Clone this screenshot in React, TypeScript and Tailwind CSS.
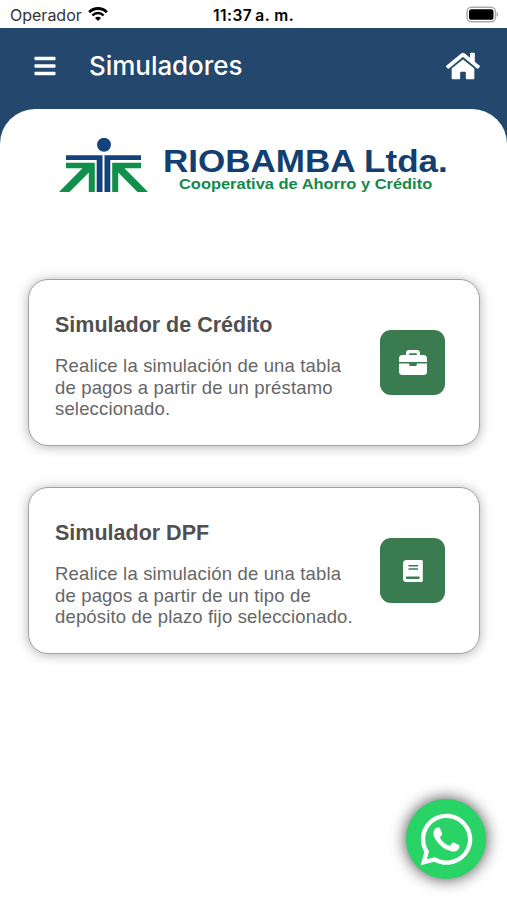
import type { ReactNode } from "react";
import { FaBars, FaHome, FaWhatsapp } from "react-icons/fa";

function StatusBar() {
  return (
    <div className="grid h-7 grid-cols-[1fr_auto_1fr] items-center bg-white pt-0.5 pr-2 pl-2.5 font-['Inter',sans-serif] text-black">
      <div className="flex items-center gap-1.5">
        <span className="text-[16px] leading-5 text-[#333]">Operador</span>
        <svg viewBox="0 0 20 14" className="mb-0.5 h-[14px] w-5">
          <path d="M1.2 5.2a12.3 12.3 0 0 1 17.6 0" fill="none" stroke="currentColor" strokeWidth="2.8" />
          <path d="M4.4 8.5a7.7 7.7 0 0 1 11.2 0" fill="none" stroke="currentColor" strokeWidth="2.5" />
          <path d="M10 14l-3-3a4.2 4.2 0 0 1 6 0z" fill="currentColor" />
        </svg>
      </div>
      <span className="pt-0.5 pr-0.5 text-[15.5px] leading-5 font-semibold tracking-[0.5px]">11:37<span className="pl-[3px]">a. m.</span></span>
      <svg viewBox="0 0 34 17" className="mb-0.5 h-[17px] w-[34px] justify-self-end">
        <rect x="2" y="1.2" width="28.5" height="14.6" rx="4.5" fill="#fff" stroke="#aaa" strokeWidth="1.5" />
        <rect x="4" y="3.2" width="24.5" height="10.6" rx="2.6" fill="#000" />
        <path d="M31.8 6.2q1.4.7 1.4 2.3t-1.4 2.3z" fill="#aaa" />
      </svg>
    </div>
  );
}

function Logo() {
  return (
    <div className="flex h-[56px] pl-[59px]">
      <svg viewBox="0 0 90 54" className="h-[54px] w-[90px]">
        <circle cx="45" cy="6.8" r="7" fill="#14427a" />
        <g fill="#14427a">
          <path d="M7 17.2h36.5V54h-5.8V22H7z" />
          <path d="M82 17.2H45.5V54h5.8V22H82z" />
        </g>
        <g fill="#10904a">
          <path d="M7 24.8h28.8V54h-6V34.6L10.5 54H0l23.5-23.8H7z" />
          <path d="M82 24.8H53.2V54h6V34.6L78.5 54H89L65.5 30.2H82z" />
        </g>
      </svg>
      <div className="pt-[10px] pl-[14px] font-['Liberation_Sans',sans-serif] font-bold whitespace-nowrap">
        <div className="origin-left scale-x-[1.13] text-[31px] leading-[28px] text-[#123f6f]">RIOBAMBA Ltda.</div>
        <div className="origin-left translate-x-4 scale-x-[1.06] text-[15.5px] leading-4 text-[#14894a]">Cooperativa de Ahorro y Crédito</div>
      </div>
    </div>
  );
}

function BriefcaseIcon() {
  return (
    <svg viewBox="0 0 28 25" className="h-[25px] w-7" fill="currentColor">
      <path fillRule="evenodd" d="M7 5V3a3 3 0 0 1 3-3h8a3 3 0 0 1 3 3v2h3.5a3.500 3.500 0 0 1 3.500 3.500V12H0V8.500A3.500 3.500 0 0 1 3.500 5zm3.200 0h7.600V3.300h-7.600z" />
      <path d="M0 13.500h10.200v1.300q0 1.200 1.200 1.200h5.200q1.200 0 1.200-1.200v-1.300H28v8a3.500 3.500 0 0 1-3.500 3.500h-21A3.500 3.500 0 0 1 0 21.500z" />
    </svg>
  );
}

function BookIcon() {
  return (
    <svg viewBox="0 0 20 22" className="h-[22px] w-5" fill="currentColor">
      <path fillRule="evenodd" d="M3.500 0h15Q19.800 0 19.800 1.300v19.400q0 1.300-1.300 1.300h-15A3.500 3.500 0 0 1 0 18.500v-15A3.500 3.500 0 0 1 3.500 0zm2 5v1.500H15V5zm0 3.300v1.500H15V8.300zM4 16.500a1.250 1.250 0 0 0 0 2.500h12.500v-2.500z" />
    </svg>
  );
}

function Card({ title, lines, icon }: { title: string; lines: string[]; icon: ReactNode }) {
  return (
    <section className="flex h-[167px] items-center justify-between rounded-[20px] border border-[#a3a3a3] bg-white pr-[34px] pl-[26px] shadow-[0_1px_12px_rgba(0,0,0,0.3)]">
      <div className="pt-2 whitespace-nowrap">
        <h2 className="text-[21.5px] leading-6 font-bold text-[#505050]">{title}</h2>
        <p className="pt-[18px] text-[18.5px] leading-[21.5px] tracking-[0.16px] text-[#666]">
          {lines.map((line) => (
            <span key={line} className="block">{line}</span>
          ))}
        </p>
      </div>
      <div className="flex size-[65px] shrink-0 items-center justify-center rounded-[11px] bg-[#3b7b50] text-white">{icon}</div>
    </section>
  );
}

export default function App() {
  return (
    <div className="flex h-[900px] w-[507px] flex-col overflow-hidden bg-[#24486d] font-['Liberation_Sans',sans-serif]">
      <StatusBar />
      <header className="flex h-[81px] items-center pr-[27px] pb-[5px] pl-[33px] text-white">
        <FaBars className="size-6" />
        <h1 className="pl-8 font-['Inter',sans-serif] text-[26px] leading-8 font-medium tracking-[-0.05px]">Simuladores</h1>
        <FaHome className="ml-auto h-[34px] w-[34px]" />
      </header>
      <main className="flex-1 rounded-t-[35px] bg-white pt-[29px]">
        <Logo />
        <div className="flex flex-col gap-[41px] pt-[85px] pr-[27px] pl-7">
          <Card
            title="Simulador de Crédito"
            lines={["Realice la simulación de una tabla", "de pagos a partir de un préstamo", "seleccionado."]}
            icon={<BriefcaseIcon />}
          />
          <Card
            title="Simulador DPF"
            lines={["Realice la simulación de una tabla", "de pagos a partir de un tipo de", "depósito de plazo fijo seleccionado."]}
            icon={<BookIcon />}
          />
        </div>
      </main>
      <button className="absolute top-[799px] left-[406px] flex size-20 items-center justify-center rounded-full bg-[#29d366] text-white shadow-[0_0_16px_rgba(0,0,0,0.75)]">
        <FaWhatsapp className="size-[59px]" />
      </button>
    </div>
  );
}
